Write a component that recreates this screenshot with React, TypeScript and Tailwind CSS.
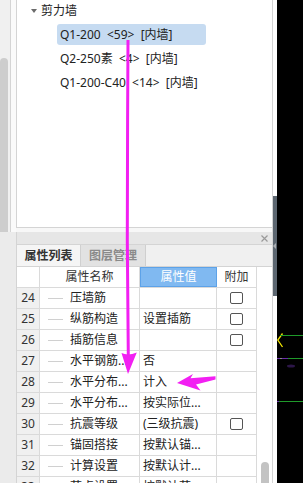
import type { ReactNode } from 'react';

const treeItems = ['Q1-200  <59>  [内墙]', 'Q2-250素  <4>  [内墙]', 'Q1-200-C40  <14>  [内墙]'];

const rows: { n: number; name: string; value: string; check: boolean }[] = [
  { n: 24, name: '压墙筋', value: '', check: true },
  { n: 25, name: '纵筋构造', value: '设置插筋', check: true },
  { n: 26, name: '插筋信息', value: '', check: true },
  { n: 27, name: '水平钢筋...', value: '否', check: false },
  { n: 28, name: '水平分布...', value: '计入', check: false },
  { n: 29, name: '水平分布...', value: '按实际位...', check: false },
  { n: 30, name: '抗震等级', value: '(三级抗震)', check: true },
  { n: 31, name: '锚固搭接', value: '按默认锚...', check: false },
  { n: 32, name: '计算设置', value: '按默认计...', check: false },
  { n: 33, name: '节点设置', value: '按默认节...', check: false },
];

function Row({ children, header }: { children: ReactNode; header?: boolean }) {
  return (
    <div className={`flex h-[21px] flex-none border-b border-[#dadada] ${header ? 'bg-white' : ''}`}>
      {children}
    </div>
  );
}

function TreePanel() {
  return (
    <div className="flex h-[228px] flex-none flex-col gap-[3px] border-b border-l border-[#d4d4d4] bg-white">
      <div className="flex h-[21px] items-center pl-[14px]">
        <svg width="6" height="4" viewBox="0 0 6 4" className="mr-[4px]">
          <path d="M0 0 L6 0 L3 4 Z" fill="#6b6b6b" />
        </svg>
        <span>剪力墙</span>
      </div>
      {treeItems.map((t, i) => (
        <div key={t} className="pl-[40px]">
          <div
            className={`flex h-[21px] w-[149px] items-center rounded-[3px] pl-[3px] ${
              i === 0 ? 'bg-[#c6dbf1]' : ''
            }`}
          >
            <span className="whitespace-pre">{t}</span>
          </div>
        </div>
      ))}
    </div>
  );
}

function PropertyPanel() {
  return (
    <div className="flex min-h-0 flex-1 flex-col overflow-hidden border-l border-[#d4d4d4]">
      <div className="flex h-[12px] flex-none items-center justify-end bg-[#e6e6e6] pr-[4px]">
        <svg width="7" height="7" viewBox="0 0 7 7">
          <path d="M0.5 0.5 L6.5 6.5 M6.5 0.5 L0.5 6.5" stroke="#9a9a9a" strokeWidth="1.2" />
        </svg>
      </div>
      <div className="flex h-[23px] flex-none border-b border-t border-[#d4d4d4] bg-[#f0f0f0] text-[12px] font-bold">
        <div className="flex w-[64px] items-center justify-center border-r border-[#d0d0d0] bg-[#f5f5f5] text-[#333]">
          属性列表
        </div>
        <div className="flex w-[65px] items-center justify-center border-r border-[#cfcfcf] bg-[#e2e2e2] text-[#8a8a8a]">
          图层管理
        </div>
      </div>
      <div className="flex min-h-0 flex-1 bg-white">
        <div className="flex w-[240px] flex-none flex-col">
          <Row header>
            <div className="w-[23px] border-r border-[#dadada]" />
            <div className="flex w-[100px] items-center justify-center border-r border-[#dadada] text-[#333]">
              属性名称
            </div>
            <div className="flex w-[77px] items-center justify-center border border-[#5da2e8] bg-[#80b9f1] text-white">
              属性值
            </div>
            <div className="flex w-[40px] items-center justify-center border-r border-[#dadada] text-[#333]">
              附加
            </div>
          </Row>
          {rows.map((r) => (
            <Row key={r.n}>
              <div className="flex w-[23px] items-center justify-center border-r border-[#dadada] bg-[#f0f0f0] text-[#333]">
                {r.n}
              </div>
              <div className="flex w-[100px] items-center border-r border-[#dadada] pl-[8px]">
                <span className="mr-[7px] h-px w-[15px] bg-[#d0d0d0]" />
                <span className="whitespace-nowrap text-[#222]">{r.name}</span>
              </div>
              <div className="flex w-[77px] items-center border-r border-[#dadada] pl-[3px] whitespace-nowrap text-[#222]">
                {r.value}
              </div>
              <div className="flex w-[40px] items-center justify-center border-r border-[#dadada]">
                {r.check && (
                  <span className="h-[12px] w-[13px] rounded-[2px] border border-[#555] bg-white" />
                )}
              </div>
            </Row>
          ))}
        </div>
        <div className="flex w-[15px] flex-none flex-col pl-[4px]">
          <div className="h-[195px] flex-none" />
          <div className="h-[30px] w-[8px] rounded-t-full bg-[#c3c3c3]" />
        </div>
      </div>
    </div>
  );
}

function CadView() {
  return (
    <svg width="26" height="483" viewBox="0 0 26 483" className="block">
      <rect width="26" height="483" fill="#000" />
      <path d="M5.5 333.5 L0.8 340 L5.5 347" stroke="#f2e600" strokeWidth="1.3" fill="none" />
      <path d="M3 335.5 H26" stroke="#1f9a2a" strokeWidth="1" />
      <path d="M0 358.5 H3" stroke="#6a2ea8" strokeWidth="1" />
      <path d="M3 358.5 H5" stroke="#8a8a8a" strokeWidth="1" />
      <path d="M5 358.5 H11" stroke="#6a2ea8" strokeWidth="1" />
      <path d="M11 358.5 H26" stroke="#1f9a2a" strokeWidth="1" />
      <ellipse cx="14" cy="366" rx="4" ry="1.5" fill="#2c1648" />
      <path d="M0 401.5 H2" stroke="#6a2ea8" strokeWidth="1" />
      <path d="M2 401.5 H26" stroke="#1f9a2a" strokeWidth="1" />
    </svg>
  );
}

export default function App() {
  return (
    <div className="relative flex h-[483px] w-[303px] overflow-hidden bg-white font-['Noto_Sans','Noto_Sans_CJK_SC',sans-serif] text-[12px] leading-none text-[#222]">
      <div className="flex w-[16px] flex-none flex-col">
        <div className="flex h-[232px] flex-none">
          <div className="flex w-[10px] flex-col bg-[#f0f0f0]">
            <div className="h-[58px] flex-none" />
            <div className="w-[8px] flex-1 rounded-t-[4px] bg-[#cdcdcd]" />
          </div>
          <div className="w-[6px] border-l border-[#d4d4d4] bg-[#fafafa]" />
        </div>
        <div className="flex-1 bg-[#ebebeb]" />
      </div>

      <div className="flex w-[256px] flex-none flex-col">
        <TreePanel />
        <div className="h-[4px] flex-none bg-[#f7f7f7]" />
        <PropertyPanel />
      </div>

      <div className="flex w-[5px] flex-none flex-col border-l border-[#d4d4d4] bg-white">
        <div className="h-[196px] flex-none" />
        <div className="flex h-[100px] flex-none items-center bg-[#5c6670]">
          <svg width="3" height="6" viewBox="0 0 3 6">
            <path d="M3 0 L0 3 L3 6 Z" fill="#a9adb2" />
          </svg>
        </div>
      </div>

      <CadView />

      <svg
        width="303"
        height="483"
        viewBox="0 0 303 483"
        className="pointer-events-none absolute left-0 top-0"
      >
        <path d="M128 40 L127.6 120 L127.3 240 L128.3 356" stroke="#f21ff2" strokeWidth="3" fill="none" />
        <path d="M121.5 353 Q128 356 136.8 352.5 L128 374 Z" fill="#f21ff2" />
        <path
          d="M177 383 L193 374 L190.5 378.3 L215.5 376.2 L215.5 379.6 L196 384.5 L200.5 390.5 Z"
          fill="#f21ff2"
        />
      </svg>
    </div>
  );
}
